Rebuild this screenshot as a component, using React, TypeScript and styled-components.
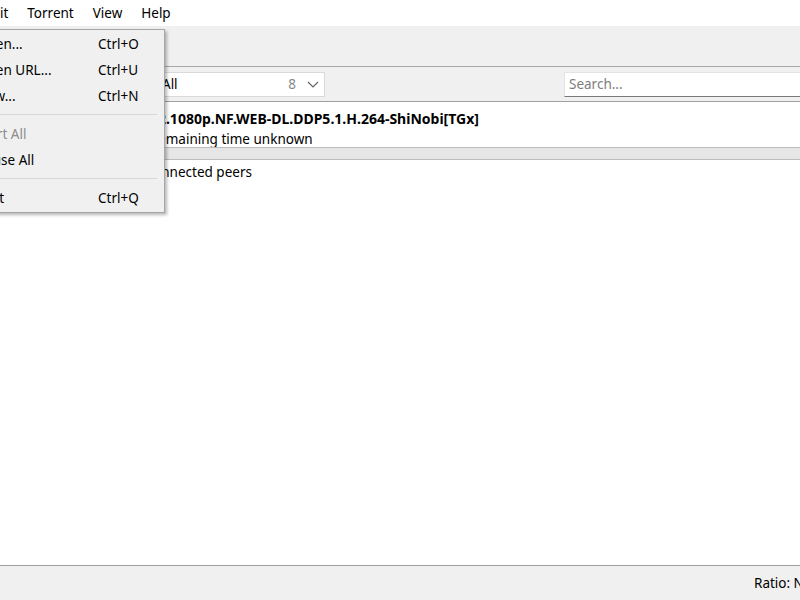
import React from "react";
import styled, { createGlobalStyle } from "styled-components";

const GlobalStyle = createGlobalStyle`
  html, body { margin: 0; padding: 0; overflow: hidden; background: #ffffff; }
  body { font-family: "Noto Sans", "Open Sans", sans-serif; font-size: 13px; color: #000; }
  #root { width: 800px; height: 600px; overflow: hidden; }
`;

const LEFT_HIDDEN = 70;
const RIGHT_HIDDEN = 40;

const Window = styled.div`
  position: relative;
  display: flex;
  flex-direction: column;
  height: 600px;
  width: ${800 + LEFT_HIDDEN + RIGHT_HIDDEN}px;
  margin-left: -${LEFT_HIDDEN}px;
  background: #ffffff;
`;

const MenuBar = styled.div`
  display: flex;
  align-items: center;
  height: 26px;
  padding-left: 4px;
  background: #ffffff;
`;

const MenuTitle = styled.div`
  padding: 0 9.5px;
  line-height: 26px;
  font-size: 13.5px;
`;

const Toolbar = styled.div`
  height: 40px;
  background: #f0f0f0;
  border-bottom: 1px solid #a8a8a8;
`;

const FilterBar = styled.div`
  display: flex;
  align-items: center;
  height: 35px;
  padding: 0 14px 0 8px;
  box-sizing: border-box;
  background: #f0f0f0;
  border-bottom: 1px solid #a0a0a0;
  gap: 8px;
`;

const FilterLabel = styled.span`
  width: 184px;
  font-size: 13.5px;
`;

const Combo = styled.div`
  display: flex;
  align-items: center;
  width: 195px;
  height: 25px;
  box-sizing: border-box;
  padding: 0 4px 0 7px;
  background: #ffffff;
  border: 1px solid #d9d9d9;
  gap: 8px;
  font-size: 13.5px;
`;

const ComboIcon = styled.span`
  width: 16px;
  height: 16px;
  flex: none;
`;

const ComboLabel = styled.span`
  flex: 1;
`;

const ComboCount = styled.span`
  color: #8a8a8a;
  margin-right: 2px;
`;

const Spacer = styled.div`
  flex: 1;
`;

const Search = styled.div`
  width: 262px;
  height: 25px;
  box-sizing: border-box;
  padding: 0 4px;
  display: flex;
  align-items: center;
  background: #ffffff;
  border: 1px solid #e3e3e3;
  border-bottom-color: #7a7a7a;
  color: #7d7d7d;
  font-size: 13.5px;
`;

const List = styled.div`
  flex: 1;
  background: #ffffff;
  overflow: hidden;
`;

const Row = styled.div`
  display: flex;
  padding: 7px 8px 4px 8px;
  gap: 8px;
`;

const RowIcon = styled.div`
  width: 32px;
  height: 32px;
  flex: none;
`;

const RowBody = styled.div`
  flex: 1;
  display: flex;
  flex-direction: column;
  min-width: 0;
`;

const RowLine = styled.div<{ $bold?: boolean; $h?: number }>`
  height: ${(p) => p.$h ?? 20}px;
  line-height: 20px;
  white-space: nowrap;
  font-size: ${(p) => (p.$bold ? 14 : 13.5)}px;
  font-weight: ${(p) => (p.$bold ? 700 : 400)};
`;

const Progress = styled.div`
  height: 13px;
  margin: 0 0 2px 0;
  box-sizing: border-box;
  background: #e6e6e6;
  border: 1px solid #bcbcbc;
`;

const StatusBar = styled.div`
  display: flex;
  align-items: center;
  justify-content: flex-end;
  height: 34px;
  padding-right: 12px;
  background: #f0f0f0;
  border-top: 1px solid #a0a0a0;
  font-size: 13.5px;
`;

const Dropdown = styled.div`
  position: absolute;
  left: 4px;
  top: 29px;
  width: 231px;
  box-sizing: border-box;
  padding: 1px 0;
  background: #f0f0f0;
  border: 1px solid #a6a6a6;
  box-shadow: 2px 2px 3px rgba(0, 0, 0, 0.28);
`;

const Item = styled.div<{ $disabled?: boolean }>`
  display: grid;
  grid-template-columns: 1fr 46px;
  height: 26px;
  align-items: center;
  padding: 0 20px 0 42px;
  font-size: 13.5px;
  color: ${(p) => (p.$disabled ? "#8d8d8d" : "#000")};
  white-space: nowrap;
`;

const Shortcut = styled.span`
  margin-left: 0;
`;

const Separator = styled.div`
  height: 1px;
  margin: 5px 7px 6px 30px;
  background: #d7d7d7;
`;

const menuItems: Array<
  { label: string; shortcut?: string; disabled?: boolean } | "sep"
> = [
  { label: "Open...", shortcut: "Ctrl+O" },
  { label: "Open URL...", shortcut: "Ctrl+U" },
  { label: "New...", shortcut: "Ctrl+N" },
  "sep",
  { label: "Start All", disabled: true },
  { label: "Pause All" },
  "sep",
  { label: "Quit", shortcut: "Ctrl+Q" },
];

export default function App() {
  return (
    <>
      <GlobalStyle />
      <Window>
        <MenuBar>
          {["File", "Edit", "Torrent", "View", "Help"].map((m) => (
            <MenuTitle key={m}>{m}</MenuTitle>
          ))}
        </MenuBar>
        <Toolbar />
        <FilterBar>
          <FilterLabel>Show:</FilterLabel>
          <Combo>
            <ComboIcon />
            <ComboLabel>All</ComboLabel>
            <ComboCount>8</ComboCount>
            <svg width="14" height="12" viewBox="0 0 14 12">
              <path d="M2 4 L7 9 L12 4" fill="none" stroke="#606060" strokeWidth="1.1" />
            </svg>
          </Combo>
          <Spacer />
          <Search>Search...</Search>
        </FilterBar>
        <List>
          <Row>
            <RowIcon />
            <RowBody>
              <RowLine $bold>Glass.Onion.Knife.Out.2022.1080p.NF.WEB-DL.DDP5.1.H.264-ShiNobi[TGx]</RowLine>
              <RowLine $h={18}>0 bytes of 4.21 GB (0.00%) - remaining time unknown</RowLine>
              <Progress />
              <RowLine>Downloading from 0 of 10 connected peers</RowLine>
            </RowBody>
          </Row>
        </List>
        <StatusBar>Ratio: None</StatusBar>
        <Dropdown>
          {menuItems.map((it, i) =>
            it === "sep" ? (
              <Separator key={i} />
            ) : (
              <Item key={i} $disabled={it.disabled}>
                <span>{it.label}</span>
                <Shortcut>{it.shortcut ?? ""}</Shortcut>
              </Item>
            )
          )}
        </Dropdown>
      </Window>
    </>
  );
}
